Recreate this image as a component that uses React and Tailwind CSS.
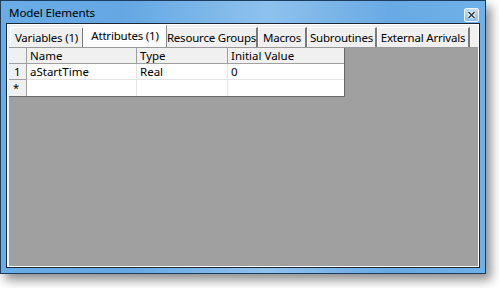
import React from "react";

const font = { fontFamily: '"Noto Sans", "Open Sans", sans-serif' };

function Tab({ label, width, selected }) {
  if (selected) {
    return (
      <div
        className="relative z-10 -ml-[1px] -mr-[1px] flex h-[22px] items-start justify-center whitespace-nowrap border-l border-r border-t border-l-white border-r-[#8a8a8a] border-t-white bg-[#fcfcfc] pt-[2px] text-[11.5px] leading-[16px] tracking-[-0.2px] text-black"
        style={{ width }}
      >
        {label}
      </div>
    );
  }
  return (
    <div
      className="mt-[2px] flex h-[20px] items-start justify-center whitespace-nowrap border-l border-r-2 border-t border-l-white border-r-[#7a7a7a] border-t-white bg-[#f0f0f0] pt-[2px] text-[11.5px] leading-[16px] tracking-[-0.2px] text-black"
      style={{ width }}
    >
      {label}
    </div>
  );
}

export default function App() {
  return (
    <div className="h-[288px] w-[499px] bg-white" style={font}>
      <div className="flex h-[274px] w-[486px] flex-col border border-[#1e3d5c] bg-[linear-gradient(90deg,#6aace6,#64a7e3_25%,#8ec2ee_55%,#6aaae4_80%,#6fb0e8)] shadow-[5px_6px_10px_rgba(0,0,0,0.45)]">
        {/* Title bar */}
        <div className="flex h-[22px] items-center justify-between pl-[8px] pr-[6px]">
          <span className="mt-[2px] whitespace-nowrap text-[11.6px] leading-none tracking-[-0.1px] text-black">Model Elements</span>
          <div className="mt-[5px] flex h-[14px] w-[15px] items-center justify-center rounded-[2px] border border-[#eef5fc] bg-[linear-gradient(180deg,#c5def3,#90bde6)]">
            <svg width="9" height="8" viewBox="0 0 9 8">
              <path d="M1.5 1 L7.5 7 M7.5 1 L1.5 7" stroke="#ffffff" strokeWidth="3.2" />
              <path d="M1.5 1 L7.5 7 M7.5 1 L1.5 7" stroke="#2e3c4d" strokeWidth="1.6" />
            </svg>
          </div>
        </div>
        {/* Client area */}
        <div className="mx-[5px] mb-[5px] flex flex-1 flex-col border border-[#1c2733]">
          <div className="flex flex-1 flex-col border border-white bg-[#f0f0f0] pl-[1px]">
            {/* Tabs */}
            <div className="flex h-[22px] items-end pl-[1px]">
              <Tab label="Variables (1)" width={74} />
              <Tab label="Attributes (1)" width={84} selected />
              <Tab label="Resource Groups" width={92} />
              <Tab label="Macros" width={49} />
              <Tab label="Subroutines" width={70} />
              <Tab label="External Arrivals" width={93} />
            </div>
            {/* Grid area */}
            <div className="flex-1 border-t border-[#9a9a9a] bg-[#a0a0a0]">
              <div className="w-[336px] border-b border-r border-[#6a6a6a] bg-white text-[11.5px] leading-[16px] text-black">
                <div className="flex h-[16px] bg-[#f0f0f0]">
                  <div className="w-[18px] border-b border-r border-[#a0a0a0]" />
                  <div className="w-[110px] border-b border-r border-[#a0a0a0] pl-[3px] leading-[15px]">Name</div>
                  <div className="w-[91px] border-b border-r border-[#a0a0a0] pl-[3px] leading-[15px]">Type</div>
                  <div className="flex-1 border-b border-[#a0a0a0] pl-[3px] leading-[15px]">Initial Value</div>
                </div>
                <div className="flex h-[16px]">
                  <div className="w-[18px] border-b border-r border-[#a0a0a0] bg-[#f0f0f0] pl-[5px] leading-[15px]">1</div>
                  <div className="w-[110px] border-b border-r border-[#e4e4e4] pl-[3px] leading-[15px]">aStartTime</div>
                  <div className="w-[91px] border-b border-r border-[#e4e4e4] pl-[3px] leading-[15px]">Real</div>
                  <div className="flex-1 border-b border-[#e4e4e4] pl-[3px] leading-[15px]">0</div>
                </div>
                <div className="flex h-[16px]">
                  <div className="w-[18px] border-r border-[#a0a0a0] bg-[#f0f0f0] pl-[4px] text-[11px] leading-[15px]">*</div>
                  <div className="w-[110px] border-r border-[#e4e4e4]" />
                  <div className="w-[91px] border-r border-[#e4e4e4]" />
                  <div className="flex-1" />
                </div>
              </div>
            </div>
          </div>
        </div>
      </div>
    </div>
  );
}
